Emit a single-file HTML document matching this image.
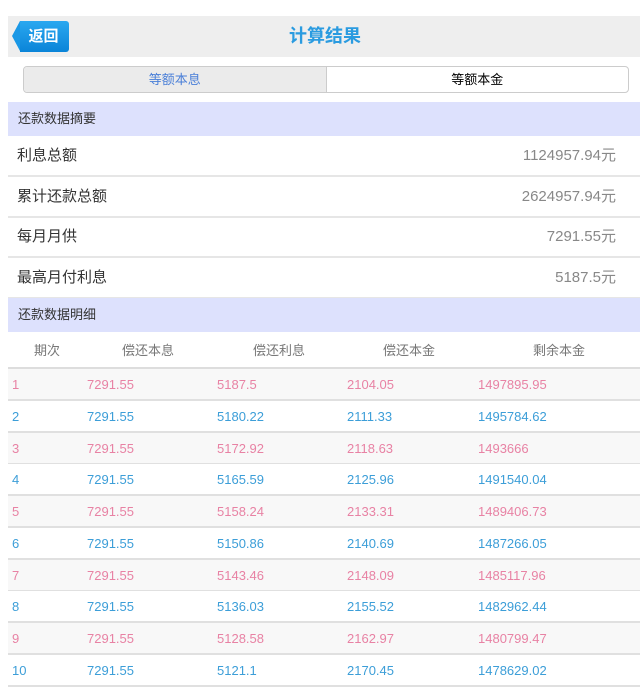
<!DOCTYPE html><html><head><meta charset="utf-8"><style>
*{margin:0;padding:0;box-sizing:border-box}
body{width:640px;height:693px;background:#fff;font-family:"Liberation Sans","Noto Sans CJK SC",sans-serif;position:relative;overflow:hidden}
.a{position:absolute}
.hdr{left:8px;top:16px;width:632px;height:41px;background:#eeeeee}
.title{left:0;width:650px;top:16px;line-height:41px;text-align:center;color:#2a9be0;font-size:18px;font-weight:bold}
.back{left:20px;top:21px;width:49px;height:31px;background:linear-gradient(#2aa8f0,#0a84d8);border-radius:0 3px 3px 0;color:#fff;font-weight:bold;font-size:15px;line-height:31px;text-align:center;padding-right:2px;white-space:nowrap}
.tip{left:12px;top:21px;width:0;height:0;border-top:15.5px solid transparent;border-bottom:15.5px solid transparent;border-right:8px solid #1a98e6}
.tabs{left:23px;top:66px;width:606px;height:27px;border:1px solid #ccc;border-radius:4px;overflow:hidden;display:flex;font-size:13px}
.tabs div{flex:1;text-align:center;line-height:25px}
.t1{background:#ebebeb;color:#4a7fd8;border-right:1px solid #ccc}
.sec{left:8px;width:632px;height:34px;background:#dde1fd;font-size:13px;color:#333;line-height:34px;padding-left:10px}
.row{left:8px;width:632px;height:41px;border-bottom:2px solid #e6e6e6;font-size:15px;color:#333;line-height:39px;padding-left:9px}
.row span{position:absolute;right:24px;color:#888}
.ch{left:8px;top:332px;width:632px;height:37px;font-size:13px;color:#777;line-height:38px;border-bottom:2px solid #ddd}
.d{left:8px;width:632px;height:32px;border-bottom:2px solid #e0e0e0;font-size:13px;line-height:31px}
.d.o{background:#f8f8f8;color:#e882a4}.d.e{background:#fff;color:#3c9ed8}
.d i,.ch i{position:absolute;font-style:normal}
</style></head><body>
<div class="a hdr"></div>
<div class="a title">计算结果</div>
<div class="a tip"></div><div class="a back">返回</div>
<div class="a tabs"><div class="t1">等额本息</div><div>等额本金</div></div>
<div class="a sec" style="top:102px">还款数据摘要</div>
<div class="a row" style="top:136px">利息总额<span>1124957.94元</span></div>
<div class="a row" style="top:177px">累计还款总额<span>2624957.94元</span></div>
<div class="a row" style="top:217px">每月月供<span>7291.55元</span></div>
<div class="a row" style="top:258px">最高月付利息<span>5187.5元</span></div>
<div class="a sec" style="top:298px">还款数据明细</div>
<div class="a ch"><i style="left:26px">期次</i><i style="left:114px">偿还本息</i><i style="left:245px">偿还利息</i><i style="left:375px">偿还本金</i><i style="left:525px">剩余本金</i></div>
<div id="t"></div>
<script>
var r=[["1","7291.55","5187.5","2104.05","1497895.95"],["2","7291.55","5180.22","2111.33","1495784.62"],["3","7291.55","5172.92","2118.63","1493666"],["4","7291.55","5165.59","2125.96","1491540.04"],["5","7291.55","5158.24","2133.31","1489406.73"],["6","7291.55","5150.86","2140.69","1487266.05"],["7","7291.55","5143.46","2148.09","1485117.96"],["8","7291.55","5136.03","2155.52","1482962.44"],["9","7291.55","5128.58","2162.97","1480799.47"],["10","7291.55","5121.1","2170.45","1478629.02"]];
var xs=[4,79,209,339,470],h="";
r.forEach(function(a,k){h+='<div class="a d '+(k%2?'e':'o')+'" style="top:'+(369+k*31.75)+'px">';a.forEach(function(v,j){h+='<i style="left:'+xs[j]+'px">'+v+'</i>'});h+='</div>'});
document.getElementById('t').innerHTML=h;
</script>
</body></html>
